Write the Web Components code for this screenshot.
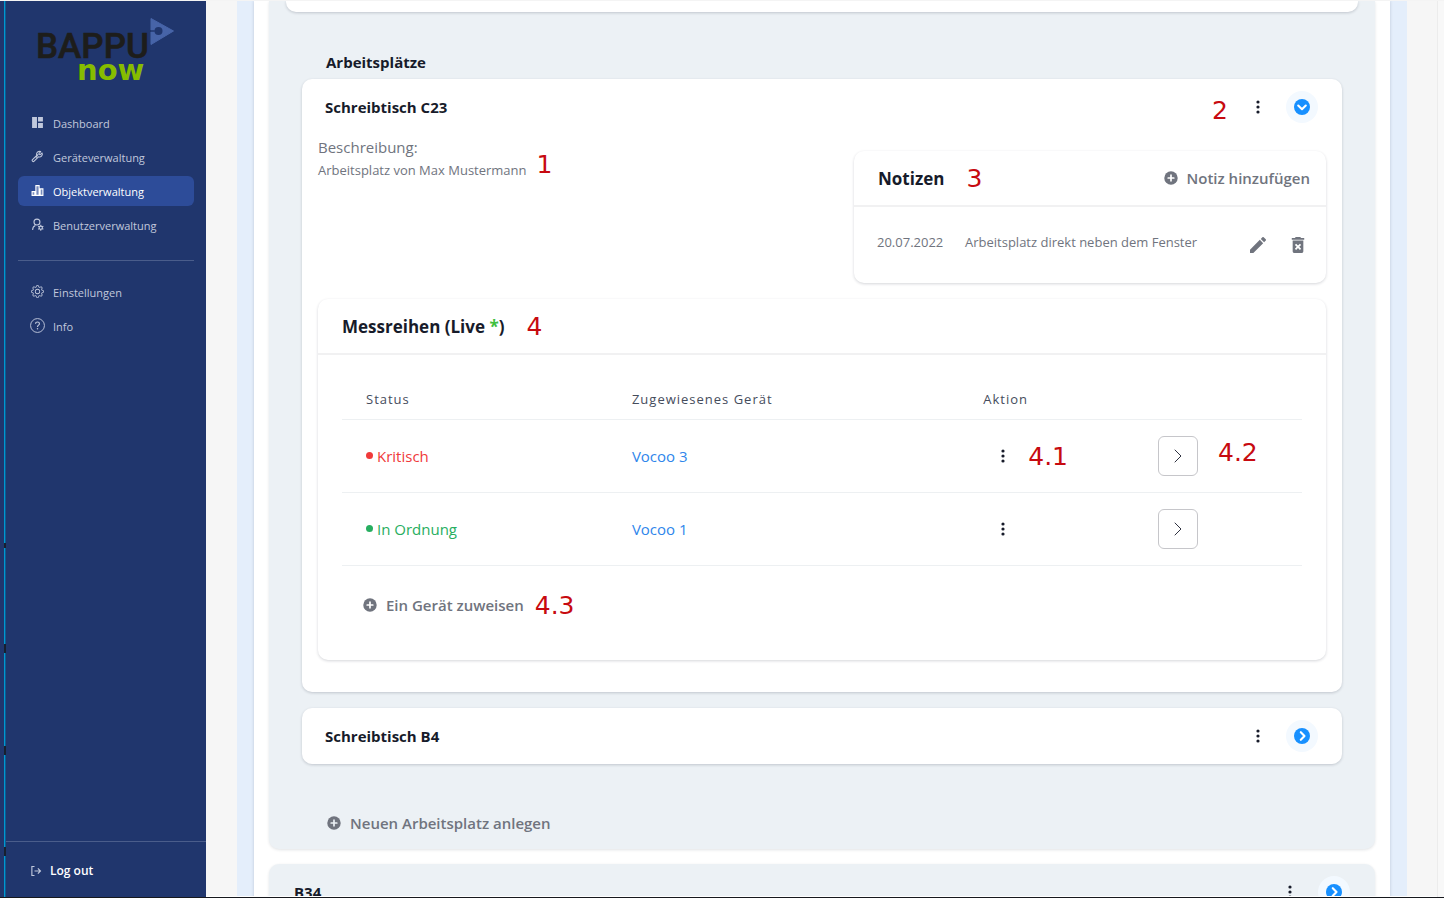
<!DOCTYPE html>
<html lang="de">
<head>
<meta charset="utf-8">
<title>BAPPU now – Objektverwaltung</title>
<style>
  html, body { height: 100%; margin: 0; }
  body {
    display: flex; flex-direction: column; overflow: hidden; box-sizing: border-box;
    border-top: 1px solid #f4f4f4; border-bottom: 1px solid #16181d;
    background: #f6f6f6; color: #171b2a;
    font-family: "Open Sans", "Noto Sans", sans-serif; font-size: 15px; line-height: 24px;
  }
</style>
</head>
<body>
<bappu-app></bappu-app>

<script>
const ICONS = {
  dashboard: ['0 0 24 24', '<path fill="currentColor" d="M2 2h9v20H2zM13 2h9v8h-9zM13 13h9v9h-9z"/>'],
  wrench: ['0 0 24 24', '<path fill="none" stroke="currentColor" stroke-width="2" stroke-linejoin="round" d="M20.5 5.5l-3.4 3.2-2-.3-.4-2 3.2-3.4c-2.600-1-5.500-.2-6.900 2-1.100 1.700-1 3.500-.3 5L2.800 17.800c-1 1-.900 2 0 2.900s2 1 3 0l7.900-8.200c2 .7 4.300.3 5.700-1.200 1.500-1.600 1.900-3.900 1.100-5.800zM13 8l-4 6"/>'],
  bars: ['0 0 24 24', '<g fill="currentColor" fill-opacity=".35" stroke="currentColor" stroke-width="2"><path d="M2 14h5v7H2zM9 3h6v18H9zM17 9h5v12h-5z"/></g>'],
  user: ['0 0 24 24', '<g fill="none" stroke="currentColor" stroke-width="2"><circle cx="11" cy="7.500" r="5.500"/><path d="M3 22c0-4 1.500-6.500 5-8"/><circle cx="18" cy="18" r="3"/></g><path stroke="currentColor" stroke-width="2" d="M18 12.500v3M18 20.500v3M13.200 15.200l2.600 1.500M20.200 19.300l2.600 1.500M13.200 20.800l2.600-1.500M20.200 16.700l2.600-1.500"/>'],
  gear: ['0 0 16 16', '<path fill="currentColor" d="M8 4.754a3.246 3.246 0 1 0 0 6.492 3.246 3.246 0 0 0 0-6.492zM5.754 8a2.246 2.246 0 1 1 4.492 0 2.246 2.246 0 0 1-4.492 0z"/><path fill="currentColor" d="M9.796 1.343c-.527-1.790-3.065-1.790-3.592 0l-.094.319a.873.873 0 0 1-1.255.520l-.292-.160c-1.640-.892-3.433.902-2.540 2.541l.159.292a.873.873 0 0 1-.520 1.255l-.319.094c-1.790.527-1.790 3.065 0 3.592l.319.094a.873.873 0 0 1 .520 1.255l-.160.292c-.892 1.640.901 3.434 2.541 2.540l.292-.159a.873.873 0 0 1 1.255.520l.094.319c.527 1.790 3.065 1.790 3.592 0l.094-.319a.873.873 0 0 1 1.255-.520l.292.160c1.640.893 3.434-.902 2.540-2.541l-.159-.292a.873.873 0 0 1 .520-1.255l.319-.094c1.790-.527 1.790-3.065 0-3.592l-.319-.094a.873.873 0 0 1-.520-1.255l.160-.292c.893-1.640-.902-3.433-2.541-2.540l-.292.159a.873.873 0 0 1-1.255-.520l-.094-.319zm-2.633.283c.246-.835 1.428-.835 1.674 0l.094.319a1.873 1.873 0 0 0 2.693 1.115l.291-.160c.764-.415 1.600.420 1.184 1.185l-.159.292a1.873 1.873 0 0 0 1.116 2.692l.318.094c.835.246.835 1.428 0 1.674l-.319.094a1.873 1.873 0 0 0-1.115 2.693l.160.291c.415.764-.420 1.600-1.185 1.184l-.291-.159a1.873 1.873 0 0 0-2.693 1.116l-.094.318c-.246.835-1.428.835-1.674 0l-.094-.319a1.873 1.873 0 0 0-2.692-1.115l-.292.160c-.764.415-1.600-.420-1.184-1.185l.159-.291A1.873 1.873 0 0 0 1.945 8.930l-.319-.094c-.835-.246-.835-1.428 0-1.674l.319-.094A1.873 1.873 0 0 0 3.060 4.377l-.160-.292c-.415-.764.420-1.600 1.185-1.184l.292.159a1.873 1.873 0 0 0 2.692-1.115l.094-.319z"/>'],
  help: ['0 0 16 16', '<circle cx="8" cy="8" r="7.400" fill="none" stroke="currentColor"/><path fill="none" stroke="currentColor" stroke-width="1.200" d="M5.900 6.200c0-1.300 1-2 2.100-2s2.100.700 2.100 1.900c0 1.500-2.100 1.600-2.100 3.300v.3"/><circle cx="8" cy="11.500" r=".8" fill="currentColor"/>'],
  logout: ['0 0 16 16', '<path fill="none" stroke="currentColor" stroke-width="1.500" d="M6 2H2.500v12H6M6 8h8M10.500 4.500L14 8l-3.500 3.500"/>'],
  plus: ['0 0 20 20', '<circle cx="10" cy="10" r="9.600" fill="currentColor"/><path stroke="var(--plus, #fff)" stroke-width="2.400" stroke-linecap="round" d="M10 6v8M6 10h8"/>'],
  dots: ['0 0 16 16', '<g fill="currentColor"><circle cx="8" cy="3" r="1.600"/><circle cx="8" cy="8" r="1.600"/><circle cx="8" cy="13" r="1.600"/></g>'],
  down: ['0 0 16 16', '<circle cx="8" cy="8" r="8" fill="#1890ff"/><path fill="none" stroke="#fff" stroke-width="2.100" stroke-linecap="round" stroke-linejoin="round" d="M4.200 6.500L8 10.200l3.800-3.700"/>'],
  right: ['0 0 16 16', '<circle cx="8" cy="8" r="8" fill="#1890ff"/><path fill="none" stroke="#fff" stroke-width="2.100" stroke-linecap="round" stroke-linejoin="round" d="M6.800 4.200L10.500 8l-3.700 3.800"/>'],
  chevron: ['0 0 16 16', '<path fill="none" stroke="currentColor" stroke-width=".9" stroke-linecap="round" stroke-linejoin="round" d="M5 2l6 6-6 6"/>'],
  pencil: ['3 3 18 18', '<path fill="currentColor" d="M3 17.250V21h3.750L17.810 9.940l-3.750-3.750L3 17.250zM20.710 7.040a1 1 0 0 0 0-1.410l-2.340-2.340a1 1 0 0 0-1.410 0l-1.830 1.830 3.750 3.750 1.830-1.830z"/>'],
  trash: ['3 3 18 18', '<path fill="currentColor" fill-rule="evenodd" d="M6 19c0 1.100.9 2 2 2h8c1.100 0 2-.9 2-2V7H6zM8.460 11.880l1.410-1.410L12 12.590l2.120-2.120 1.410 1.410L13.410 14l2.120 2.120-1.410 1.410L12 15.410l-2.120 2.120-1.410-1.410L10.590 14zM15.500 4l-1-1h-5l-1 1H5v2h14V4z"/>']
};

class Base extends HTMLElement {
  constructor() { super(); this.attachShadow({ mode: 'open' }); }
  connectedCallback() {
    if (!this.shadowRoot.firstChild)
      this.shadowRoot.innerHTML = `<style>*{box-sizing:border-box}${this.css()}</style>${this.html()}`;
  }
  css() { return ''; }
  html() { return '<slot></slot>'; }
}

class UiIcon extends Base {
  css() { return ':host{display:block;flex:none;width:16px;height:16px} svg{display:block;width:100%;height:100%}'; }
  html() {
    const [box, body] = ICONS[this.getAttribute('name')];
    return `<svg viewBox="${box}" aria-hidden="true">${body}</svg>`;
  }
}

class CalloutMark extends Base {
  css() { return ':host{display:block;flex:none;padding-top:2px;font:25px/24px "DejaVu Sans",sans-serif;color:#c70a10}'; }
}

class IconButton extends Base {
  css() {
    return `:host{display:block;flex:none}
      button{display:flex;align-items:center;justify-content:center;width:32px;height:32px;padding:0;border:0;border-radius:50%;background:none;color:inherit}
      :host([kind=toggle]) button{background:#f3f9ff}
      :host([kind=boxed]) button{width:40px;height:40px;border:1px solid #c6c6ca;border-radius:6px;background:#fff}
      :host([kind=row]) button{width:40px}
      :host([kind=tool]) button{width:16px;height:30px}`;
  }
  html() { return `<button type="button" aria-label="${this.getAttribute('label')}"><ui-icon name="${this.getAttribute('icon')}"></ui-icon></button>`; }
}

class AddButton extends Base {
  css() {
    return `:host{display:block;flex:none}
      button{display:flex;align-items:center;gap:9px;padding:0;border:0;background:none;font:inherit;font-weight:600;color:#70747e}
      ui-icon{width:14px;height:14px}`;
  }
  html() { return '<button type="button"><ui-icon name="plus"></ui-icon><slot></slot></button>'; }
}

class BappuLogo extends Base {
  css() { return ':host{display:block} svg{display:block;width:144px;height:72px}'; }
  html() {
    return `<svg viewBox="0 0 144 72" role="img" aria-label="BAPPU now">
      <text x="0" y="44" font-family="Roboto, sans-serif" font-weight="500" font-size="35" fill="#1d1d1b" stroke="#1d1d1b" stroke-width=".6">BAPPU</text>
      <text x="41" y="66" font-family="DejaVu Sans, sans-serif" font-weight="700" font-size="29" fill="#86bc00">now</text>
      <path fill="#4764a8" stroke="#4764a8" stroke-linejoin="round" d="M115 4.500l22.500 12.500L115 30.500V18h4v-2h-4z"/>
      <path stroke="#20366d" d="M114 17h8"/><circle cx="122.500" cy="17" r="4" fill="#20366d"/>
    </svg>`;
  }
}

class NavItem extends Base {
  css() {
    return `:host{display:block;color:#c0c8dc}
      a{display:flex;align-items:center;gap:9px;height:30px;padding:0 12px;border-radius:6px;color:inherit;text-decoration:none;font-size:11px}
      span{display:flex;justify-content:center;width:14px;padding-bottom:2px}
      ui-icon{width:13px;height:13px}
      :host([large]) ui-icon{width:15px;height:15px}
      :host([active]) a{background:#2d4c99;color:#fff}
      slot{display:block;padding-top:2px}`;
  }
  html() { return `<a href="#"><span><ui-icon name="${this.getAttribute('icon')}"></ui-icon></span><slot></slot></a>`; }
}

class AppSidebar extends Base {
  css() {
    return `:host{display:flex;flex:none;width:206px;background:#20366d}
      .edge{flex:none;width:2px;margin-left:4px;background:
        linear-gradient(#17202f,#17202f) 0 542px/2px 5px no-repeat,
        linear-gradient(#17202f,#17202f) 0 643px/2px 9px no-repeat,
        linear-gradient(#17202f,#17202f) 0 745px/2px 9px no-repeat,
        linear-gradient(#17202f,#17202f) 0 846px/2px 9px no-repeat,
        linear-gradient(90deg,#0098d0 50%,#0b5c92 50%)}
      .panel{display:flex;flex-direction:column;flex:1}
      bappu-logo{margin:13px 0 0 30px}
      nav{display:grid;gap:4px;padding:0 12px}
      .main{margin-top:22px}
      hr{width:176px;height:1px;margin:20px 12px 16px;border:0;background:#4a5d8b}
      footer{display:flex;align-items:center;height:56px;margin-top:auto;padding:2px 24px 0;border-top:1px solid #4a5d8b}
      button{display:flex;align-items:center;gap:8px;height:30px;padding:0;border:0;background:none;color:#fff;font:inherit;font-size:12px;font-weight:600}
      button ui-icon{width:12px;height:12px;color:#c0c8dc}`;
  }
  html() {
    return `<div class="edge"></div><div class="panel">
      <bappu-logo></bappu-logo>
      <nav class="main">
        <nav-item icon="dashboard">Dashboard</nav-item>
        <nav-item icon="wrench">Geräteverwaltung</nav-item>
        <nav-item icon="bars" active>Objektverwaltung</nav-item>
        <nav-item icon="user">Benutzerverwaltung</nav-item>
      </nav>
      <hr>
      <nav>
        <nav-item icon="gear">Einstellungen</nav-item>
        <nav-item icon="help" large>Info</nav-item>
      </nav>
      <footer><button type="button"><ui-icon name="logout"></ui-icon>Log out</button></footer>
    </div>`;
  }
}

/* Collapsible box: used for rooms (tone="room") and for workplaces. */
class FoldCard extends Base {
  css() {
    return `:host{display:block;border-radius:10px;background:#fff;box-shadow:0 1px 3px rgba(20,30,50,.2)}
      :host([tone=room]){background:#ecf1f5;box-shadow:0 1px 3px rgba(20,30,50,.12)}
      header{display:flex;align-items:center;height:56px;padding:0 24px 0 23px}
      :host([tone=room]) header{padding:0 25px}
      h3{flex:1;margin:0;font-size:15px;line-height:24px;font-weight:700}
      .acts{display:flex;align-items:center;gap:12px}
      ::slotted(callout-mark){padding:8px 2px 0 0}`;
  }
  html() {
    const open = this.hasAttribute('open');
    return `<header><h3>${this.getAttribute('heading')}</h3>
      <div class="acts"><slot name="mark"></slot><icon-button icon="dots" label="Menü"></icon-button>
      <icon-button kind="toggle" icon="${open ? 'down' : 'right'}" label="${open ? 'Zuklappen' : 'Aufklappen'}"></icon-button></div></header>
      <slot></slot>`;
  }
}

class InfoPanel extends Base {
  css() {
    return `:host{display:block;border-radius:10px;background:#fff;box-shadow:0 1px 3px rgba(20,30,50,.18)}
      header{display:flex;align-items:center;height:56px;padding:0 16px 0 24px;border-bottom:2px solid #f1f1f2}
      h4{margin:0 22px 0 0;padding-top:2px;font-size:17px;line-height:24px;font-weight:700}
      .end{margin-left:auto}`;
  }
  html() { return '<header><h4><slot name="heading"></slot></h4><slot name="mark"></slot><div class="end"><slot name="action"></slot></div></header><slot></slot>'; }
}

class NoteRow extends Base {
  css() {
    return `:host{display:flex;align-items:flex-start;height:76px;padding:23px 20px 0 23px;font-size:13px;color:#70747e}
      time{width:88px}
      p{flex:1;margin:0}
      div{display:flex;gap:24px}`;
  }
  html() {
    return `<time datetime="2022-07-20">20.07.2022</time><p><slot></slot></p>
      <div><icon-button kind="tool" icon="pencil" label="Bearbeiten"></icon-button><icon-button kind="tool" icon="trash" label="Löschen"></icon-button></div>`;
  }
}

class SeriesTable extends Base {
  css() {
    return `:host{display:block}
      table{width:100%;table-layout:fixed;border-collapse:collapse}
      th,td{padding:0 24px;border-bottom:1px solid #edf0f2;text-align:left;font-weight:400}
      th{height:40px;padding-top:1px;font-size:13px;color:#454c5c;letter-spacing:1px}
      td{height:73px}
      th:nth-child(1){width:27.7%} th:nth-child(2){width:36.6%} th:nth-child(3){width:18.2%}
      a{color:#2f86eb;text-decoration:none}
      .st{display:flex;align-items:center;gap:4px}
      .st::before{content:"";width:7px;height:7px;border-radius:50%;background:currentColor}
      .bad{color:#f03a3a}.ok{color:#27ae60}
      .row{display:flex;align-items:center;gap:5px}
      .wide{gap:20px}
      .wide callout-mark{padding-bottom:8px}`;
  }
  html() {
    const row = (cls, text, dev, a, b) => `<tr><td><div class="st ${cls}">${text}</div></td><td><a href="#">${dev}</a></td>
      <td><div class="row"><icon-button kind="row" icon="dots" label="Menü"></icon-button>${a}</div></td>
      <td><div class="row wide"><icon-button kind="boxed" icon="chevron" label="Öffnen"></icon-button>${b}</div></td></tr>`;
    return `<table><thead><tr><th>Status</th><th>Zugewiesenes Gerät</th><th>Aktion</th><th aria-label="Details"></th></tr></thead><tbody>
      ${row('bad', 'Kritisch', 'Vocoo 3', '<callout-mark>4.1</callout-mark>', '<callout-mark>4.2</callout-mark>')}
      ${row('ok', 'In Ordnung', 'Vocoo 1', '', '')}</tbody></table>`;
  }
}

class WorkplaceDetail extends Base {
  css() {
    return `:host{display:block;padding:0 16px 32px}
      .top{display:flex;justify-content:space-between;align-items:flex-start}
      .desc{display:flex;align-items:center;gap:10px;padding-top:1px;color:#70747e}
      .desc p{margin:0;line-height:23px}
      .desc p + p{font-size:13px}
      .desc callout-mark{padding-top:12px}
      .notes{width:472px;margin-top:16px}
      .series{margin-top:16px}
      .body{padding:24px 24px 42px}
      .add{display:flex;align-items:center;gap:11px;padding:26px 0 0 21px}
      i{font-style:normal;color:#3fbf3f}`;
  }
  html() {
    return `<div class="top">
        <div class="desc"><div><p>Beschreibung:</p><p>Arbeitsplatz von Max Mustermann</p></div><callout-mark>1</callout-mark></div>
        <info-panel class="notes"><span slot="heading">Notizen</span><callout-mark slot="mark">3</callout-mark>
          <add-button slot="action">Notiz hinzufügen</add-button>
          <note-row>Arbeitsplatz direkt neben dem Fenster</note-row></info-panel>
      </div>
      <info-panel class="series"><span slot="heading">Messreihen (Live <i>*</i>)</span><callout-mark slot="mark">4</callout-mark>
        <div class="body"><series-table></series-table>
          <div class="add"><add-button>Ein Gerät zuweisen</add-button><callout-mark>4.3</callout-mark></div></div>
      </info-panel>`;
  }
}

class BappuApp extends Base {
  css() {
    return `:host{display:flex;flex:1;min-height:0}
      main{flex:1;min-width:0;overflow:hidden;padding:0 30px 0 31px;border-bottom:1px solid #fff}
      .track{flex:none;width:7px;border-left:1px solid #ececec;background:#f8f8f8}
      .floor{padding:0 17px;background:#e4eefb}
      .sheet{padding:0 15px;background:#fff;box-shadow:0 0 3px rgba(20,30,50,.18)}
      .room{padding:0 33px 14px;border-radius:0 0 10px 10px;background:#ecf1f5;box-shadow:0 1px 3px rgba(20,30,50,.12)}
      .before{height:11px;margin:0 -16px;border-radius:0 0 10px 10px;background:#fff;box-shadow:0 1px 3px rgba(20,30,50,.2)}
      h2{margin:0;padding:38px 24px 5px;font-size:15px;line-height:24px;font-weight:700}
      .stack{display:grid;gap:16px}
      .add{--plus:#ecf1f5;padding:47px 25px 0}
      .next{margin-top:15px;padding-bottom:60px}`;
  }
  html() {
    return `<app-sidebar></app-sidebar>
      <main><div class="floor"><div class="sheet">
        <section class="room"><div class="before"></div>
          <h2>Arbeitsplätze</h2>
          <div class="stack">
            <fold-card heading="Schreibtisch C23" open><callout-mark slot="mark">2</callout-mark><workplace-detail></workplace-detail></fold-card>
            <fold-card heading="Schreibtisch B4"></fold-card>
          </div>
          <div class="add"><add-button>Neuen Arbeitsplatz anlegen</add-button></div>
        </section>
        <fold-card class="next" tone="room" heading="B34"></fold-card>
      </div></div></main>
      <div class="track"></div>`;
  }
}

for (const [name, cls] of Object.entries({
  'ui-icon': UiIcon, 'callout-mark': CalloutMark, 'icon-button': IconButton, 'add-button': AddButton,
  'bappu-logo': BappuLogo, 'nav-item': NavItem, 'app-sidebar': AppSidebar, 'fold-card': FoldCard,
  'info-panel': InfoPanel, 'note-row': NoteRow, 'series-table': SeriesTable,
  'workplace-detail': WorkplaceDetail, 'bappu-app': BappuApp
})) customElements.define(name, cls);
</script>
</body>
</html>
